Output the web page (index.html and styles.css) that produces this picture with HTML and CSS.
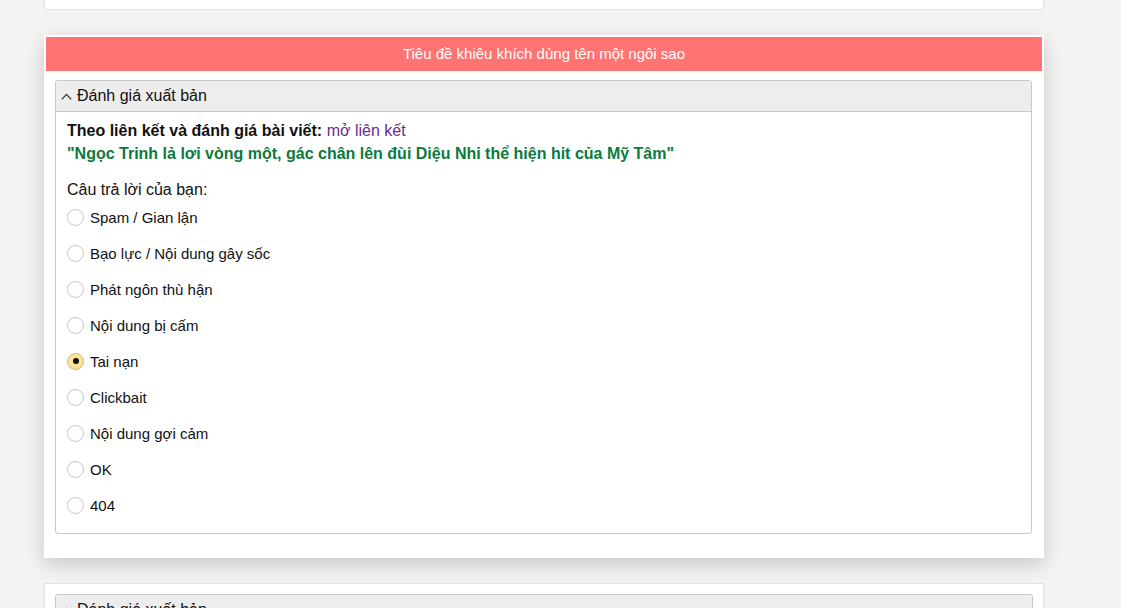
FILE: index.html
```html
<!DOCTYPE html>
<html lang="vi">
<head>
<meta charset="utf-8">
<title>Đánh giá</title>
<link rel="stylesheet" href="styles.css">
</head>
<body>
<div class="page">
  <div class="card card-prev"></div>

  <div class="card card-main">
    <div class="card-title">Tiêu đề khiêu khích dùng tên một ngôi sao</div>
    <div class="panel">
      <div class="panel-head">
        <svg class="chev" width="11" height="7" viewBox="0 0 11 7"><path d="M0.8 6.3 L5.5 1.3 L10.2 6.3" fill="none" stroke="#333" stroke-width="1.2"/></svg>
        <span>Đánh giá xuất bản</span>
      </div>
      <div class="panel-body">
        <p class="line"><b>Theo liên kết và đánh giá bài viết:</b> <a class="link" href="#">mở liên kết</a></p>
        <p class="line quote">"Ngọc Trinh lả lơi vòng một, gác chân lên đùi Diệu Nhi thể hiện hit của Mỹ Tâm"</p>
        <p class="question">Câu trả lời của bạn:</p>
        <ul class="options">
          <li class="opt"><span class="radio"></span>Spam / Gian lận</li>
          <li class="opt"><span class="radio"></span>Bạo lực / Nội dung gây sốc</li>
          <li class="opt"><span class="radio"></span>Phát ngôn thù hận</li>
          <li class="opt"><span class="radio"></span>Nội dung bị cấm</li>
          <li class="opt"><span class="radio checked"></span>Tai nạn</li>
          <li class="opt"><span class="radio"></span>Clickbait</li>
          <li class="opt"><span class="radio"></span>Nội dung gợi cảm</li>
          <li class="opt"><span class="radio"></span>OK</li>
          <li class="opt"><span class="radio"></span>404</li>
        </ul>
      </div>
    </div>
  </div>

  <div class="card card-next">
    <div class="panel">
      <div class="panel-head">
        <svg class="chev" width="11" height="7" viewBox="0 0 11 7"><path d="M0.8 6.3 L5.5 1.3 L10.2 6.3" fill="none" stroke="#333" stroke-width="1.2"/></svg>
        <span>Đánh giá xuất bản</span>
      </div>
    </div>
  </div>
</div>
</body>
</html>
```

FILE: styles.css
```css
html, body {
  margin: 0;
  padding: 0;
  height: 100%;
  overflow: hidden;
}
body {
  background: #f4f3f1;
  font-family: Arial, "Liberation Sans", sans-serif;
  color: #111;
}
.page {
  width: 1000px;
  margin-left: 44px;
  display: flex;
  flex-direction: column;
}
.card {
  background: #fff;
  box-sizing: border-box;
}
.card-prev {
  height: 10px;
  border: 1px solid #e3e2e0;
  border-top: none;
}
.card-main {
  margin-top: 25px;
  padding: 2px 2px 24px;
  box-shadow: 0 6px 18px rgba(0, 0, 0, 0.18);
}
.card-title {
  height: 34px;
  line-height: 34px;
  background: #ff7373;
  color: #fff;
  text-align: center;
  font-size: 15px;
}
.panel {
  margin: 9px 10px 0 9px;
  border: 1px solid #c8c8c8;
  border-radius: 3px;
  overflow: hidden;
}
.panel-head {
  height: 30px;
  background: #ededed;
  border-bottom: 1px solid #c8c8c8;
  display: flex;
  align-items: center;
  padding-left: 5px;
  font-size: 16px;
  color: #111;
}
.chev {
  margin-right: 5px;
  margin-top: 1px;
}
.panel-body {
  padding: 7px 11px 10px;
}
.line {
  margin: 0;
  font-size: 16px;
  line-height: 23px;
}
.link {
  color: #6a2d8e;
  text-decoration: none;
}
.quote {
  color: #0a7a3e;
  font-weight: bold;
}
.question {
  margin: 13px 0 0;
  font-size: 16px;
  line-height: 23px;
}
.options {
  list-style: none;
  margin: 0;
  padding: 0;
}
.opt {
  height: 36px;
  display: flex;
  align-items: center;
  font-size: 15px;
}
.opt:first-child {
  margin-top: -2px;
}
.radio {
  width: 17px;
  height: 17px;
  box-sizing: border-box;
  border: 1px solid #c5c5c5;
  border-radius: 50%;
  margin-right: 6px;
  background: #fff;
  position: relative;
}
.radio.checked {
  background: #fbe39a;
  border-color: #d8b865;
}
.radio.checked::after {
  content: "";
  position: absolute;
  left: 4.5px;
  top: 4.5px;
  width: 6px;
  height: 6px;
  border-radius: 50%;
  background: #111;
}
.card-next {
  margin-top: 25px;
  border: 1px solid #e3e2e0;
  padding: 10px 10px 0 10px;
  height: 60px;
}
.card-next .panel {
  margin: 0;
}
```
